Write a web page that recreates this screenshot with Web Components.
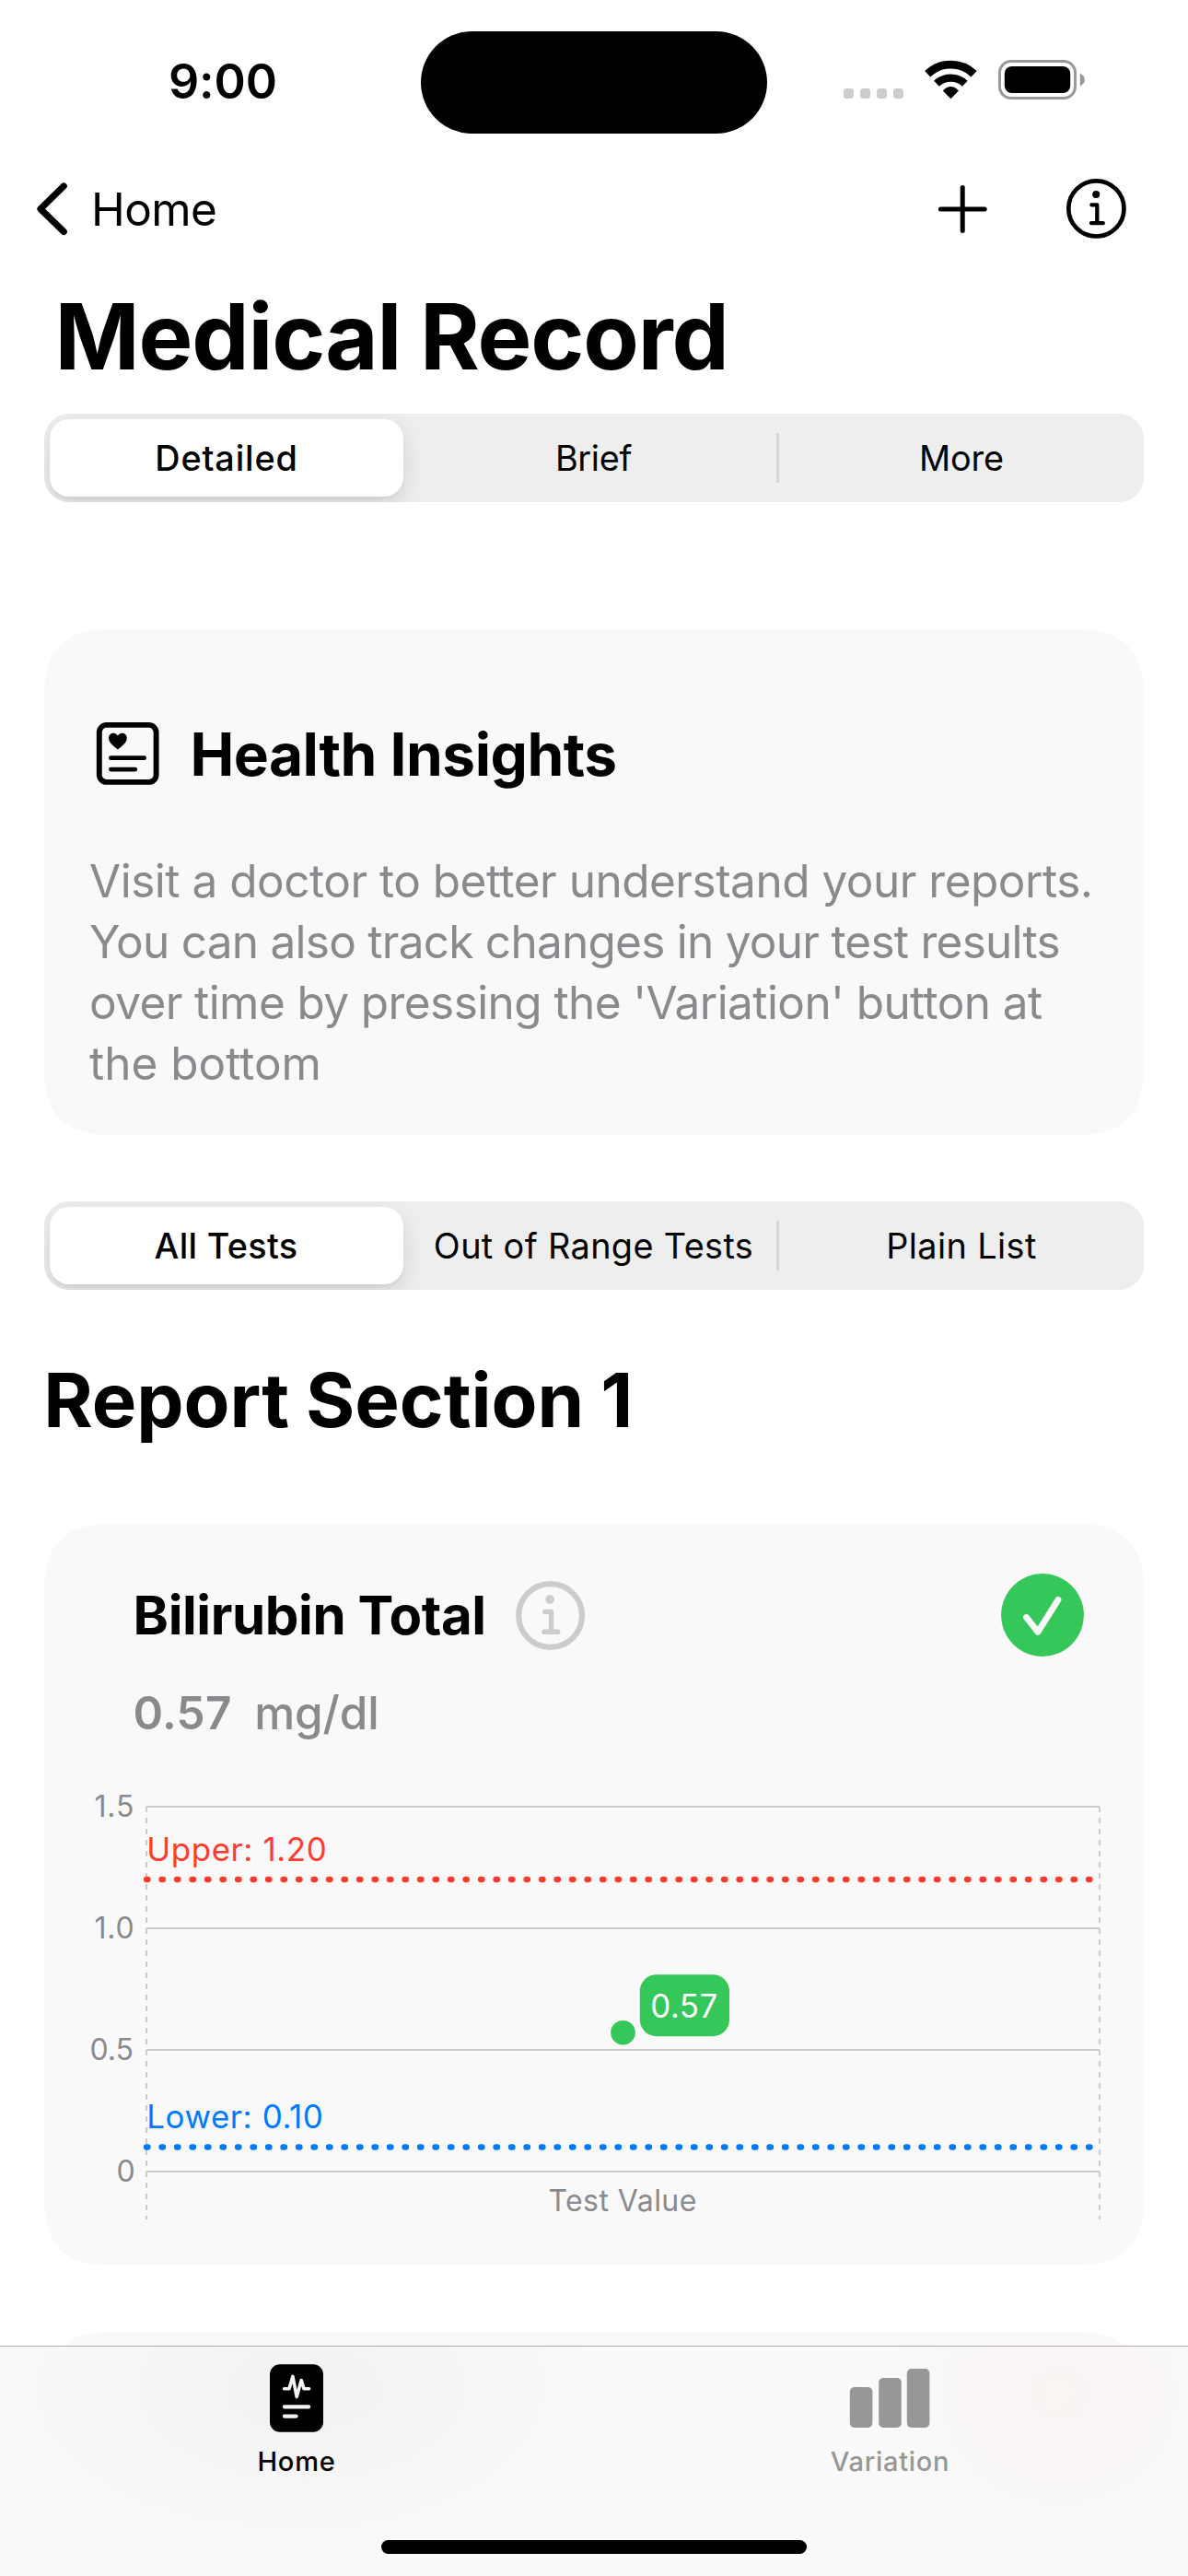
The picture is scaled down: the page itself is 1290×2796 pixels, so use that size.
<!DOCTYPE html>
<html lang="en">
<head>
<meta charset="utf-8">
<title>Medical Record</title>
<style>
  html, body { margin: 0; padding: 0; }
  body { width: 1290px; height: 2796px; overflow: hidden; background: #fff; color: #000; font-family: Inter, "Liberation Sans", sans-serif; }
</style>
</head>
<body>
<phone-screen>
  <status-bar>9:00</status-bar>
  <nav-bar>Home</nav-bar>
  <page-title>Medical Record</page-title>
  <segmented-control>
    <seg-item selected style="letter-spacing:.85px">Detailed</seg-item>
    <seg-item style="letter-spacing:-.3px">Brief</seg-item>
    <seg-item style="letter-spacing:-.1px;padding-left:3px">More</seg-item>
  </segmented-control>
  <insight-card>
    <span slot="heading">Health Insights</span>
    <text-line style="letter-spacing:-.49px">Visit a doctor to better understand your reports.</text-line>
    <text-line style="letter-spacing:-.74px">You can also track changes in your test results</text-line>
    <text-line style="letter-spacing:-.58px">over time by pressing the 'Variation' button at</text-line>
    <text-line>the bottom</text-line>
  </insight-card>
  <segmented-control style="margin-top:72px">
    <seg-item selected style="letter-spacing:.3px;padding-right:1px">All Tests</seg-item>
    <seg-item style="letter-spacing:.38px">Out of Range Tests</seg-item>
    <seg-item style="letter-spacing:.4px;padding-left:3px">Plain List</seg-item>
  </segmented-control>
  <section-title>Report Section 1</section-title>
  <result-card>
    <span slot="name">Bilirubin Total</span>
    <span slot="value">0.57</span>
    <span slot="unit">mg/dl</span>
    <range-chart></range-chart>
  </result-card>
  <next-card></next-card>
  <tab-bar slot="tabs">
    <tab-item active>
      <svg slot="icon" width="60" height="84" viewBox="292 2562 60 84">
        <rect x="293" y="2566.3" width="58" height="73.4" rx="11"/>
        <g fill="none" stroke="#f3f3f3" stroke-linecap="round" stroke-linejoin="round">
          <path stroke-width="3.6" d="M308.6 2592.8H314L317.9 2579.4L322.2 2601.6L327.2 2583.6L330 2592.8H335.6"/>
          <path stroke-width="4.2" d="M308.9 2612.3H335.2M308.9 2622.6H321.6"/>
        </g>
      </svg>
      <span style="letter-spacing:.77px">Home</span>
    </tab-item>
    <tab-item>
      <svg slot="icon" width="88" height="84" viewBox="922 2562 88 84" fill="#969895">
        <rect x="922.8" y="2591" width="24.6" height="44" rx="5"/>
        <rect x="954.2" y="2581" width="24.6" height="54" rx="5"/>
        <rect x="984.8" y="2571" width="24.6" height="64" rx="5"/>
      </svg>
      <span style="letter-spacing:.7px;padding-left:1px">Variation</span>
    </tab-item>
  </tab-bar>
</phone-screen>

<script>
const define = (name, css, html) => {
  const tpl = document.createElement('template');
  tpl.innerHTML = `<style>${css}</style>${html}`;
  customElements.define(name, class extends HTMLElement {
    constructor() {
      super();
      this.attachShadow({ mode: 'open' }).append(tpl.content.cloneNode(true));
    }
  });
};

define('phone-screen', `
  :host { display: flex; flex-direction: column; width: 1290px; height: 2796px; background: #fff; }
  main { flex: 1 1 0; min-height: 0; display: flex; flex-direction: column; overflow: hidden; }
`, `<main><slot></slot></main><slot name="tabs"></slot>`);

define('status-bar', `
  :host { display: grid; grid-template-columns: 457px 376px 457px; align-items: start; height: 177px; flex: none; }
  .time { padding: 59px 0 0 183px; font-size: 52px; line-height: 60px; font-weight: 600; letter-spacing: -.15px; }
  .island { height: 111px; margin-top: 33.5px; border-radius: 56px; background: #000; }
  .icons { display: flex; gap: 23px; padding: 65px 0 0 83px; }
  svg { display: block; }
`, `<div class="time"><slot></slot></div><div class="island"></div>
<div class="icons">
  <svg width="65" height="43" viewBox="916 65 65 43" fill="#ccc"><rect x="916" y="96" width="11" height="11" rx="3.4"/><rect x="934" y="96" width="11" height="11" rx="3.4"/><rect x="952" y="96" width="11" height="11" rx="3.4"/><rect x="970" y="96" width="11" height="11" rx="3.4"/></svg>
  <svg width="57" height="43" viewBox="1004 65 57 43"><g fill="none" stroke="#000"><path stroke-width="8.8" d="M1007.2 80.3A36.5 36.5 0 0 1 1057.6 80.3"/><path stroke-width="8.3" d="M1017 90.7A22.4 22.4 0 0 1 1047.8 90.7"/></g><path d="M1023.8 98.4Q1032.4 89.8 1041 98.4L1032.4 107.2Z"/></svg>
  <svg width="95" height="43" viewBox="1084 65 95 43"><rect x="1085.5" y="66.5" width="82" height="40" rx="12.5" fill="none" stroke="#999" stroke-width="3"/><rect x="1090.8" y="72" width="71.4" height="29" rx="8"/><path fill="#999" d="M1172.8 79.8Q1177.8 82 1177.8 86.6T1172.8 93.4Z"/></svg>
</div>`);

define('nav-bar', `
  :host { display: flex; align-items: center; flex: none; height: 100px; padding: 0 65px 0 36px; }
  span { flex: 1; padding-left: 23px; font-size: 49.5px; line-height: 60px; letter-spacing: -.6px; }
  svg { display: block; flex: none; }
  .info { margin-left: 81px; }
`, `<svg width="40" height="60" viewBox="36 197 40 60" fill="none" stroke="#000" stroke-width="7.2" stroke-linecap="round" stroke-linejoin="round"><path d="M69.2 202L44 226.8L69.2 251.4"/></svg>
<span><slot></slot></span>
<svg width="60" height="60" viewBox="1015 197 60 60" stroke="#000" stroke-width="5" stroke-linecap="round"><path d="M1045.2 203.5V250.5M1021.4 227H1069.2"/></svg>
<svg class="info" width="69" height="68" viewBox="1156 193 69 68" fill="none" stroke="#000" stroke-linecap="round" stroke-linejoin="round"><circle cx="1190.4" cy="226.4" r="30.1" stroke-width="4.7"/><circle cx="1190.2" cy="211" r="4" fill="#000" stroke="none"/><path stroke-width="4.3" d="M1185.4 222.4H1191.3V242.2M1185 242.2H1197.8"/></svg>`);

define('page-title', `
  :host { display: block; flex: none; margin-top: 28px; padding-left: 59.6px; font-size: 98.9px; line-height: 120px; font-weight: 700; letter-spacing: -1.15px; word-spacing: -1.4px; }
`, `<slot></slot>`);

define('segmented-control', `
  :host { display: grid; grid-template-columns: 398px 397px 399px; flex: none; box-sizing: border-box; width: 1194px; height: 96px; margin: 24px 48px 0; border-radius: 27px; background: #eee; overflow: hidden; font-size: 37.8px; font-weight: 400; }
  ::slotted(:nth-child(3)) { background: linear-gradient(#d6d6d6, #d6d6d6) 0 50% / 3px 54px no-repeat; }
`, `<slot></slot>`);

define('seg-item', `
  :host { display: flex; align-items: center; justify-content: center; white-space: nowrap; }
  :host([selected]) { margin: 6px 8px 6px 6px; border-radius: 21px; background: #fff; font-weight: 500; box-shadow: 0 9px 24px rgba(0,0,0,.12), 0 3px 3px rgba(0,0,0,.04); }
`, `<slot></slot>`);

define('insight-card', `
  :host { display: block; flex: none; box-sizing: border-box; width: 1194px; height: 549px; margin: 138px 48px 0; padding: 96px 48px 0 49px; border-radius: 75px; corner-shape: superellipse(1.38); background: #f9f9f9; }
  header { display: flex; align-items: center; gap: 30.4px; height: 80px; padding-left: 4px; font-size: 64px; font-weight: 700; line-height: 80px; letter-spacing: -.5px; }
  div { margin-top: 64px; color: #8a8a8e; font-size: 49.5px; line-height: 66px; }
  svg { display: block; }
`, `<header><svg width="75" height="74" viewBox="101 782 75 74" fill="none" stroke="#000" stroke-linecap="round"><rect x="107.8" y="786.9" width="61.8" height="62" rx="8" stroke-width="5.9"/><path fill="#000" stroke="none" d="M127.9 813.4C124 810.6 118 806 118 801.2C118 795.4 125 794 127.9 798.6C130.8 794 137.8 795.4 137.8 801.2C137.8 806 131.8 810.6 127.9 813.4Z"/><path stroke-width="4.8" d="M120.4 822.7H156.6M120.4 835.1H146.8"/></svg><slot name="heading"></slot></header><div><slot></slot></div>`);

define('text-line', `:host { display: block; white-space: nowrap; }`, `<slot></slot>`);

define('section-title', `
  :host { display: block; flex: none; margin-top: 69.5px; margin-bottom: -.5px; padding-left: 47.2px; font-size: 81.5px; line-height: 100px; font-weight: 700; letter-spacing: -.05px; word-spacing: -1.2px; }
`, `<slot></slot>`);

define('result-card', `
  :host { display: block; flex: none; box-sizing: border-box; width: 1194px; height: 804.5px; margin: 85px 48px 0; padding-top: 54px; border-radius: 75px; corner-shape: superellipse(1.38); background: #f9f9f9; }
  header { display: flex; align-items: center; height: 90px; padding: 0 64px 0 96.6px; }
  .name { width: 412.4px; white-space: nowrap; font-size: 58.2px; font-weight: 700; letter-spacing: -.42px; }
  .check { margin-left: auto; }
  .reading { display: flex; margin-top: 31px; padding-left: 96.4px; color: #8a8a8e; font-size: 49.5px; line-height: 60px; }
  .value { width: 131.8px; font-weight: 600; letter-spacing: .29px; }
  .unit { font-weight: 500; letter-spacing: -.1px; }
  svg { display: block; flex: none; }
`, `<header>
  <span class="name"><slot name="name"></slot></span>
  <svg width="81" height="81" viewBox="557 1712 81 81" fill="none" stroke="#ccc" stroke-linecap="round" stroke-linejoin="round"><circle cx="597.6" cy="1752.5" r="34.4" stroke-width="6.2"/><circle cx="597" cy="1735" r="4.8" fill="#ccc" stroke="none"/><path stroke-width="5.4" d="M591.8 1748.4H598.6V1770.2M591 1770.2H605.8"/></svg>
  <svg class="check" width="91" height="90" viewBox="1087 1708 91 90"><circle cx="1132" cy="1753" r="44.9" fill="#35c759"/><path fill="none" stroke="#f9f9f9" stroke-width="6.8" stroke-linecap="round" stroke-linejoin="round" d="M1114.5 1755.4L1127 1771.4L1149 1736.4"/></svg>
</header>
<div class="reading"><span class="value"><slot name="value"></slot></span><span class="unit"><slot name="unit"></slot></span></div>
<slot></slot>`);

define('range-chart', `
  :host { display: block; margin-top: 41px; }
  svg { display: block; font-family: Inter, "Liberation Sans", sans-serif; }
  .axis { font-size: 32px; fill: #8a8a8e; }
  .note { font-size: 34.9px; }
`, `<svg width="1194" height="500" viewBox="48 1930 1194 500">
  <g stroke="#ccc" stroke-width="2">
    <path d="M159 1961H1194M159 2093H1194M159 2225H1194M159 2357H1194"/>
    <path stroke-dasharray="6 6" d="M159 1961V2409M1194 1961V2409"/>
  </g>
  <g class="axis">
    <text x="102.6" y="1972" letter-spacing=".76">1.5</text>
    <text x="102.6" y="2104" letter-spacing=".76">1.0</text>
    <text x="97.4" y="2236">0.5</text>
    <text x="126.4" y="2368">0</text>
    <text x="595.4" y="2399.7" letter-spacing=".45">Test Value</text>
  </g>
  <g class="note">
    <text x="159.2" y="2019.8" fill="#ff3b30" letter-spacing=".6">Upper: 1.20</text>
    <text x="159.2" y="2309.8" fill="#007aff" letter-spacing=".6">Lower: 0.10</text>
  </g>
  <g fill="none" stroke-width="6.3" stroke-linecap="round" stroke-dasharray="1.5 15">
    <path stroke="#ff3b30" d="M159 2040H1184"/>
    <path stroke="#007aff" d="M159 2330.5H1184"/>
  </g>
  <g fill="#35c759"><circle cx="676.5" cy="2206.2" r="13.3"/><rect x="694.8" y="2143.2" width="97.2" height="67" rx="18"/></g>
  <text class="note" x="706.2" y="2190" fill="#fff" letter-spacing=".5">0.57</text>
</svg>`);

define('next-card', `
  :host { display: block; flex: none; width: 1194px; height: 400px; margin: 72.5px 48px 0; border-radius: 75px; corner-shape: superellipse(1.38); background: #f9f9f9; }
`, ``);

define('tab-bar', `
  :host { display: block; flex: none; box-sizing: border-box; height: 250px; border-top: 1px solid #acacac;
    background:
      radial-gradient(340px 190px at 330px 45px, #f2f2f2, rgba(242,242,242,0)),
      radial-gradient(190px 180px at 1150px 50px, #faf4f3, rgba(250,244,243,0)),
      linear-gradient(90deg, #f8f9f8, #f9faf9 50%, #f9f9f9); }
  nav { display: grid; grid-template-columns: 644px 644px; height: 210px; }
  .indicator { width: 462px; height: 15px; margin: 0 auto; border-radius: 8px; background: #000; }
`, `<nav><slot></slot></nav><div class="indicator"></div>`);

define('tab-item', `
  :host { display: flex; flex-direction: column; align-items: center; gap: 7.5px; padding-top: 15px; color: #969895; font-size: 29.1px; line-height: 36px; font-weight: 500; }
  :host([active]) { color: #000; }
  ::slotted(svg) { display: block; }
`, `<slot name="icon"></slot><slot></slot>`);
</script>
</body>
</html>
